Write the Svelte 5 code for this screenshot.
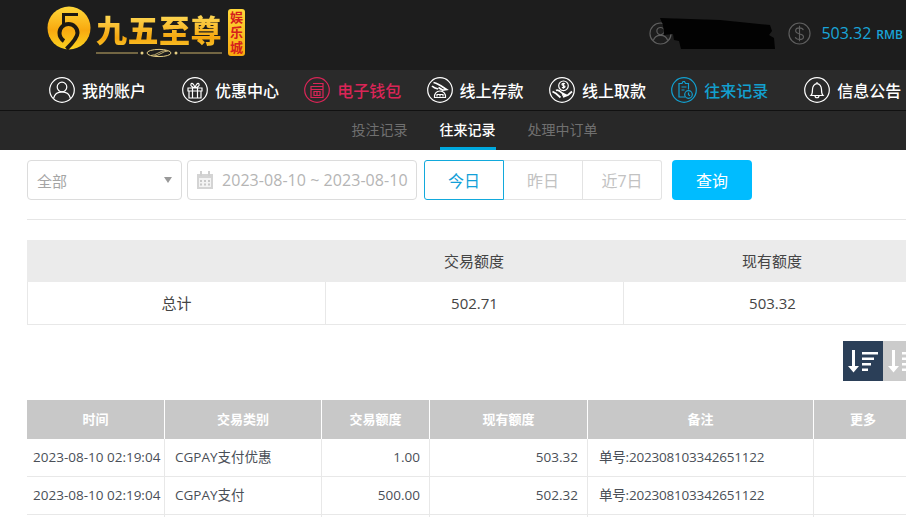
<script>
    const navItems = [
        { label: "我的账户", icon: "user", wide: true },
        { label: "优惠中心", icon: "gift" },
        { label: "电子钱包", icon: "wallet", color: "pink" },
        { label: "线上存款", icon: "deposit" },
        { label: "线上取款", icon: "withdraw" },
        { label: "往来记录", icon: "record", color: "blue", wide: true },
        { label: "信息公告", icon: "bell" },
    ];

    const subTabs = ["投注记录", "往来记录", "处理中订单"];
    const ranges = ["今日", "昨日", "近7日"];

    const rows = [
        { time: "2023-08-10 02:19:04", type: "CGPAY支付优惠", amount: "1.00", balance: "503.32", note: "单号:202308103342651122" },
        { time: "2023-08-10 02:19:04", type: "CGPAY支付", amount: "500.00", balance: "502.32", note: "单号:202308103342651122" },
    ];
</script>

<div class="page">
    <header class="top">
        <div class="logo">
            <svg class="logo-mark" viewBox="0 0 44 44" width="44" height="44">
                <defs>
                    <linearGradient id="gold" x1="0" y1="0" x2="0" y2="1">
                        <stop offset="0" stop-color="#ffd83a" />
                        <stop offset="0.55" stop-color="#f8a90f" />
                        <stop offset="1" stop-color="#fbd320" />
                    </linearGradient>
                </defs>
                <circle cx="22" cy="22" r="21.500" fill="url(#gold)" />
                <path d="M31 8.500H16.500V18" fill="none" stroke="#1e1a12" stroke-width="3" />
                <path d="M17 35c-3-2-4.500-5-4.500-8 0-5 4-9 9-9s9 4 9 9c0 5-6 11-11 16" fill="none" stroke="#1e1a12" stroke-width="4" />
            </svg>
            <div class="logo-text">
                <span class="logo-name">九五至尊</span>
                <svg class="logo-rule" viewBox="0 0 126 10" width="126" height="10">
                    <path d="M0 5h42M84 5h42" stroke="#c9b06a" stroke-width="1" />
                    <circle cx="46" cy="5" r="1.500" fill="#e4cd84" />
                    <circle cx="80" cy="5" r="1.500" fill="#e4cd84" />
                    <ellipse cx="63" cy="5" rx="12" ry="3.600" fill="none" stroke="#e4cd84" stroke-width="1" />
                    <path d="M55 7.500c5 0 9-5 15-5M58 8c5 0 9-5 14-5" fill="none" stroke="#e4cd84" stroke-width="0.800" />
                </svg>
            </div>
            <span class="logo-badge">娱乐城</span>
        </div>

        <div class="account">
            <span class="user-wrap">
                <svg class="dim-icon" viewBox="0 0 24 24" width="23" height="23">
                    <circle cx="12" cy="12" r="11" />
                    <circle cx="12" cy="9.500" r="3.800" />
                    <path d="M4.500 19.500c1-4 4-5.500 7.500-5.500s6.500 1.500 7.500 5.500" />
                </svg>
                <svg class="blot" viewBox="0 0 116 34" width="116" height="34">
                    <path d="M1 1l60 2 50 5 2 6-3 4 5 3 1 11H22l-2-8-5-1-1-6-9 1-1-10z" fill="#020202" />
                </svg>
            </span>
            <svg class="dim-icon" viewBox="0 0 24 24" width="23" height="23">
                <circle cx="12" cy="12" r="11" />
                <path d="M16 8.500c-.5-1.500-2-2.300-4-2.300-2.400 0-4 1.200-4 3 0 4.500 8.200 2.200 8.200 6.200 0 1.800-1.800 2.900-4.200 2.900-2.200 0-3.800-.9-4.400-2.500M12 4v16" />
            </svg>
            <span class="money">503.32</span>
            <span class="unit">RMB</span>
        </div>
    </header>

    <nav class="nav">
        {#each navItems as item}
            <a class="nav-item {item.color ?? ''}" class:wide={item.wide} href="#top">
                <svg viewBox="0 0 26 26" width="26" height="26" class="nav-icon">
                    <circle cx="13" cy="13" r="12.300" />
                    {#if item.icon === "user"}
                        <circle cx="13" cy="10" r="4.800" />
                        <path d="M4.500 21.500c1-4.500 4.500-6.700 8.500-6.700s7.500 2.200 8.500 6.700" />
                    {:else if item.icon === "gift"}
                        <path d="M6 11h14v3H6zM7 14v7h12v-7M10.500 11v10M15.500 11v10M13 11c-2-.5-5-2-4-4s3.500 1 4 4c.5-3 3-6 4-4s-2 3.500-4 4z" />
                    {:else if item.icon === "wallet"}
                        <path d="M9 6.500h10v13M7 9.500h12v11H7zM7 12.500h12M10 14.500h6v4h-6zM13 14.500v4" />
                    {:else if item.icon === "deposit"}
                        <path class="thick" d="M6.500 5.500c3 .5 5 2 7 3l6 4-4 .5-4-2.500M5 9c1.500 1.500 4 2.500 6 3" />
                        <path d="M7.500 20.500c-.5-3.500 2-6.500 5.500-6.500s6 3 5.500 6.500z" />
                        <path d="M9.500 17.500h7M10 19.500v-2M13 19.500v-2M16 19.500v-2" />
                    {:else if item.icon === "withdraw"}
                        <circle cx="14.500" cy="8.800" r="4.800" />
                        <path d="M14.500 5.800v6M13 10.300c1 .7 3 .7 3-.7s-3-1-3-2.200 2-1.200 3-.6" />
                        <path class="thick" d="M3.500 14.500l3.500 2 4.500 4M7 13.500c2-1 4 .5 6 2.500l3 1.500-3 .5M14 20l5-2 4-3.500" />
                    {:else if item.icon === "record"}
                        <path d="M14 20H8V6.500h3l1-2h1.500l1 2h3v6M10.500 10h5M10.500 13h3" />
                        <circle cx="17.500" cy="17.500" r="3.800" />
                        <path d="M17.500 15.500v2.200l1.500 1" />
                    {:else if item.icon === "bell"}
                        <path d="M7 18.500c1.500-1.500 1.500-3 1.500-6 0-3 2-5.800 4.500-5.800s4.500 2.800 4.500 5.800c0 3 0 4.500 1.500 6zM13 5v1.500M11 18.500c0 3 4 3 4 0" />
                    {/if}
                </svg>
                <span>{item.label}</span>
            </a>
        {/each}
    </nav>

    <div class="subnav">
        {#each subTabs as tab, i}
            <a class="sub-tab" class:active={i === 1} href="#top">{tab}</a>
        {/each}
    </div>

    <main class="content">
        <div class="filters">
            <div class="select">
                <span>全部</span>
                <i class="caret"></i>
            </div>
            <div class="dates">
                <svg viewBox="0 0 16 18" width="16" height="18" class="cal">
                    <path d="M0 3h16v15H0z" fill="#d4d4d4" />
                    <path d="M3 0h2v5H3zM11 0h2v5h-2z" fill="#cfcfcf" />
                    <path d="M2 7h12v9H2z" fill="#f3f3f3" />
                    <path d="M3 9h2v2H3zM7 9h2v2H7zM11 9h2v2h-2zM3 12.500h2v2H3zM7 12.500h2v2H7zM11 12.500h2v2h-2z" fill="#c8c8c8" />
                </svg>
                <span>2023-08-10 ~ 2023-08-10</span>
            </div>
            <div class="ranges">
                {#each ranges as r, i}
                    <button class="range" class:on={i === 0}>{r}</button>
                {/each}
            </div>
            <button class="search">查询</button>
        </div>

        <div class="summary">
            <div class="s-row s-head">
                <div></div>
                <div>交易额度</div>
                <div>现有额度</div>
            </div>
            <div class="s-row s-body">
                <div>总计</div>
                <div class="num">502.71</div>
                <div class="num">503.32</div>
            </div>
        </div>

        <div class="sorts">
            <span class="sort dark">
                <svg viewBox="0 0 40 40" width="40" height="40">
                    <path d="M9 9h3v16h4l-5.500 6.500L5 25h4zM19 11h16v2.500H19zM19 16.500h12V19H19zM19 22h9v2.500h-9zM19 27.500h6V30h-6z" fill="#fff" />
                </svg>
            </span>
            <span class="sort grey">
                <svg viewBox="0 0 40 40" width="40" height="40">
                    <path d="M9 9h3v16h4l-5.500 6.500L5 25h4zM19 11h16v2.500H19zM19 16.500h12V19H19zM19 22h9v2.500h-9zM19 27.500h6V30h-6z" fill="#fff" />
                </svg>
            </span>
        </div>

        <div class="list">
            <div class="l-row l-head">
                <div>时间</div>
                <div>交易类别</div>
                <div>交易额度</div>
                <div>现有额度</div>
                <div>备注</div>
                <div>更多</div>
            </div>
            {#each rows as row}
                <div class="l-row l-body">
                    <div class="time">{row.time}</div>
                    <div class="pad">{row.type}</div>
                    <div class="right">{row.amount}</div>
                    <div class="right">{row.balance}</div>
                    <div class="pad note">{row.note}</div>
                    <div></div>
                </div>
            {/each}
            <div class="l-row l-body"><div></div><div></div><div></div><div></div><div></div><div></div></div>
        </div>
    </main>
</div>

<style>
    :global(body) {
        margin: 0;
        background: #fff;
        overflow: hidden;
    }

    .page {
        width: 906px;
        height: 517px;
        overflow: hidden;
        font-family: "Open Sans", "Noto Sans CJK SC", sans-serif;
        font-size: 14px;
        color: #444;
    }

    a {
        text-decoration: none;
        color: inherit;
    }

    .top {
        height: 70px;
        box-sizing: border-box;
        padding-left: 47px;
        background: #1d1d1d;
        display: flex;
        justify-content: space-between;
        align-items: flex-start;
    }

    .logo {
        display: flex;
        align-items: flex-start;
        padding-top: 6px;
    }

    .logo-mark {
        display: block;
    }

    .logo-text {
        display: flex;
        flex-direction: column;
        margin-left: 5px;
        width: 127px;
    }

    .logo-name {
        font-family: "Noto Sans CJK SC", sans-serif;
        font-weight: 900;
        font-size: 31px;
        line-height: 36px;
        letter-spacing: 0.5px;
        margin-top: 5px;
        white-space: nowrap;
        background: linear-gradient(#ffe060, #f5a60e 75%, #f8c22a);
        -webkit-background-clip: text;
        background-clip: text;
        color: transparent;
    }

    .logo-rule {
        display: block;
        margin-top: 1px;
    }

    .logo-badge {
        writing-mode: vertical-rl;
        text-orientation: upright;
        font-family: "Noto Sans CJK SC", sans-serif;
        font-weight: 700;
        font-size: 13px;
        line-height: 17px;
        letter-spacing: 2px;
        width: 17px;
        height: 47px;
        box-sizing: border-box;
        padding-top: 2px;
        margin: 3px 0 0 5px;
        white-space: nowrap;
        color: #d5201c;
        border-radius: 3px;
        background: linear-gradient(#ffd83a, #f7a90f);
    }

    .account {
        display: flex;
        align-items: center;
        height: 66px;
        padding-right: 3px;
    }

    .user-wrap {
        position: relative;
        display: block;
        width: 139px;
        height: 23px;
    }

    .dim-icon {
        display: block;
        fill: none;
        stroke: #5f5f5f;
        stroke-width: 1.200;
    }

    .blot {
        position: absolute;
        left: 10px;
        top: -5px;
    }

    .money {
        margin-left: 10px;
        color: #19a5d8;
        font-size: 16px;
    }

    .unit {
        margin-left: 5px;
        color: #19a5d8;
        font-size: 12px;
        font-weight: 600;
        padding-top: 3px;
    }

    .nav {
        height: 40px;
        box-sizing: content-box;
        padding-left: 49px;
        background: #2a2a2a;
        border-bottom: 1px solid #111;
        display: flex;
        align-items: center;
    }

    .nav-item {
        width: 122.300px;
        flex: none;
        display: flex;
        align-items: center;
        gap: 7px;
        color: #fff;
        font-size: 16px;
        font-weight: 500;
        white-space: nowrap;
        font-family: "Noto Sans CJK SC", sans-serif;
    }

    .nav-item.wide {
        width: 133px;
    }

    .nav-icon {
        flex: none;
        fill: none;
        stroke: currentColor;
        stroke-width: 1.200;
    }

    .thick {
        stroke-width: 1.700;
    }

    .nav-item.pink {
        color: #da2557;
    }

    .nav-item.blue {
        color: #12a0d0;
    }

    .subnav {
        height: 39px;
        background: #282828;
        display: flex;
        justify-content: center;
        gap: 32px;
        padding-left: 43px;
        font-family: "Noto Sans CJK SC", sans-serif;
    }

    .sub-tab {
        line-height: 37px;
        color: #707070;
        font-size: 14px;
        box-sizing: border-box;
        height: 39px;
    }

    .sub-tab.active {
        color: #fff;
        font-weight: 500;
        border-bottom: 3px solid #00a9de;
    }

    .content {
        padding: 10px 0 0 27px;
        width: 1000px;
    }

    .filters {
        display: flex;
        height: 40px;
        width: 879px;
        box-sizing: content-box;
        padding-bottom: 19px;
        border-bottom: 1px solid #e6e6e6;
    }

    .select,
    .dates {
        box-sizing: border-box;
        height: 40px;
        border: 1px solid #dcdcdc;
        border-radius: 4px;
        display: flex;
        align-items: center;
        color: #a5a5a5;
    }

    .select {
        width: 155px;
        padding: 0 9px;
        justify-content: space-between;
        font-size: 15px;
    }

    .caret {
        border: 4px solid transparent;
        border-top: 6px solid #999;
        border-bottom: 0;
    }

    .dates {
        width: 230px;
        margin-left: 5px;
        padding-left: 9px;
        gap: 9px;
        font-size: 16px;
        letter-spacing: 0.05px;
        color: #b5b5b5;
        white-space: nowrap;
    }

    .ranges {
        display: flex;
        margin-left: 7px;
    }

    .range {
        width: 79px;
        height: 40px;
        margin: 0;
        padding: 0;
        background: #fff;
        border: 1px solid #e3e3e3;
        border-left-width: 0;
        color: #c2c2c2;
        font: inherit;
        font-size: 16px;
    }

    .range:last-child {
        border-radius: 0 3px 3px 0;
    }

    .range.on {
        width: 80px;
        border: 1px solid #12a9dc;
        border-radius: 3px 0 0 3px;
        color: #12a0d8;
    }

    .search {
        width: 80px;
        height: 40px;
        margin-left: 10px;
        border: 0;
        border-radius: 4px;
        background: #00bcff;
        color: #fff;
        font: inherit;
        font-size: 16px;
    }

    .summary {
        margin-top: 20px;
        width: 895px;
        font-size: 15px;
    }

    .s-row {
        display: grid;
        grid-template-columns: repeat(3, 298px);
        text-align: center;
    }

    .s-head {
        height: 42px;
        line-height: 42px;
        background: #ebebeb;
    }

    .s-body {
        grid-template-columns: 297px 298px 298px;
        height: 43px;
        line-height: 42px;
        box-sizing: border-box;
        border: 1px solid #e8e8e8;
        border-top: 0;
    }

    .s-body > div + div {
        border-left: 1px solid #e8e8e8;
    }

    .sorts {
        display: flex;
        width: 879px;
        margin-top: 16px;
        padding-left: 816px;
        box-sizing: border-box;
    }

    .sort {
        flex: none;
        width: 40px;
        height: 40px;
        display: flex;
    }

    .dark {
        background: #2b3f58;
    }

    .grey {
        background: #cbcbcb;
    }

    .list {
        margin-top: 19px;
    }

    .l-row {
        display: grid;
        grid-template-columns: 137px 157px 108px 158px 226px 99px;
        width: 885px;
    }

    .l-head {
        height: 39px;
        background: #c8c8c8;
        color: #fff;
        font-size: 13px;
        font-weight: 700;
        line-height: 39px;
        text-align: center;
    }

    .l-head > div + div {
        border-left: 1px solid #fff;
    }

    .l-body {
        height: 38px;
        line-height: 37px;
        box-sizing: border-box;
        border-bottom: 1px solid #e8e8e8;
        font-size: 13.500px;
        color: #4a4f57;
    }

    .l-body > div {
        white-space: nowrap;
        overflow: hidden;
    }

    .l-body > div + div {
        border-left: 1px solid #e8e8e8;
    }

    .time {
        padding-left: 6px;
    }

    .pad {
        padding-left: 10px;
    }

    .note {
        padding-left: 11px;
        letter-spacing: -0.2px;
    }

    .right {
        text-align: right;
        padding-right: 9px;
    }
</style>
